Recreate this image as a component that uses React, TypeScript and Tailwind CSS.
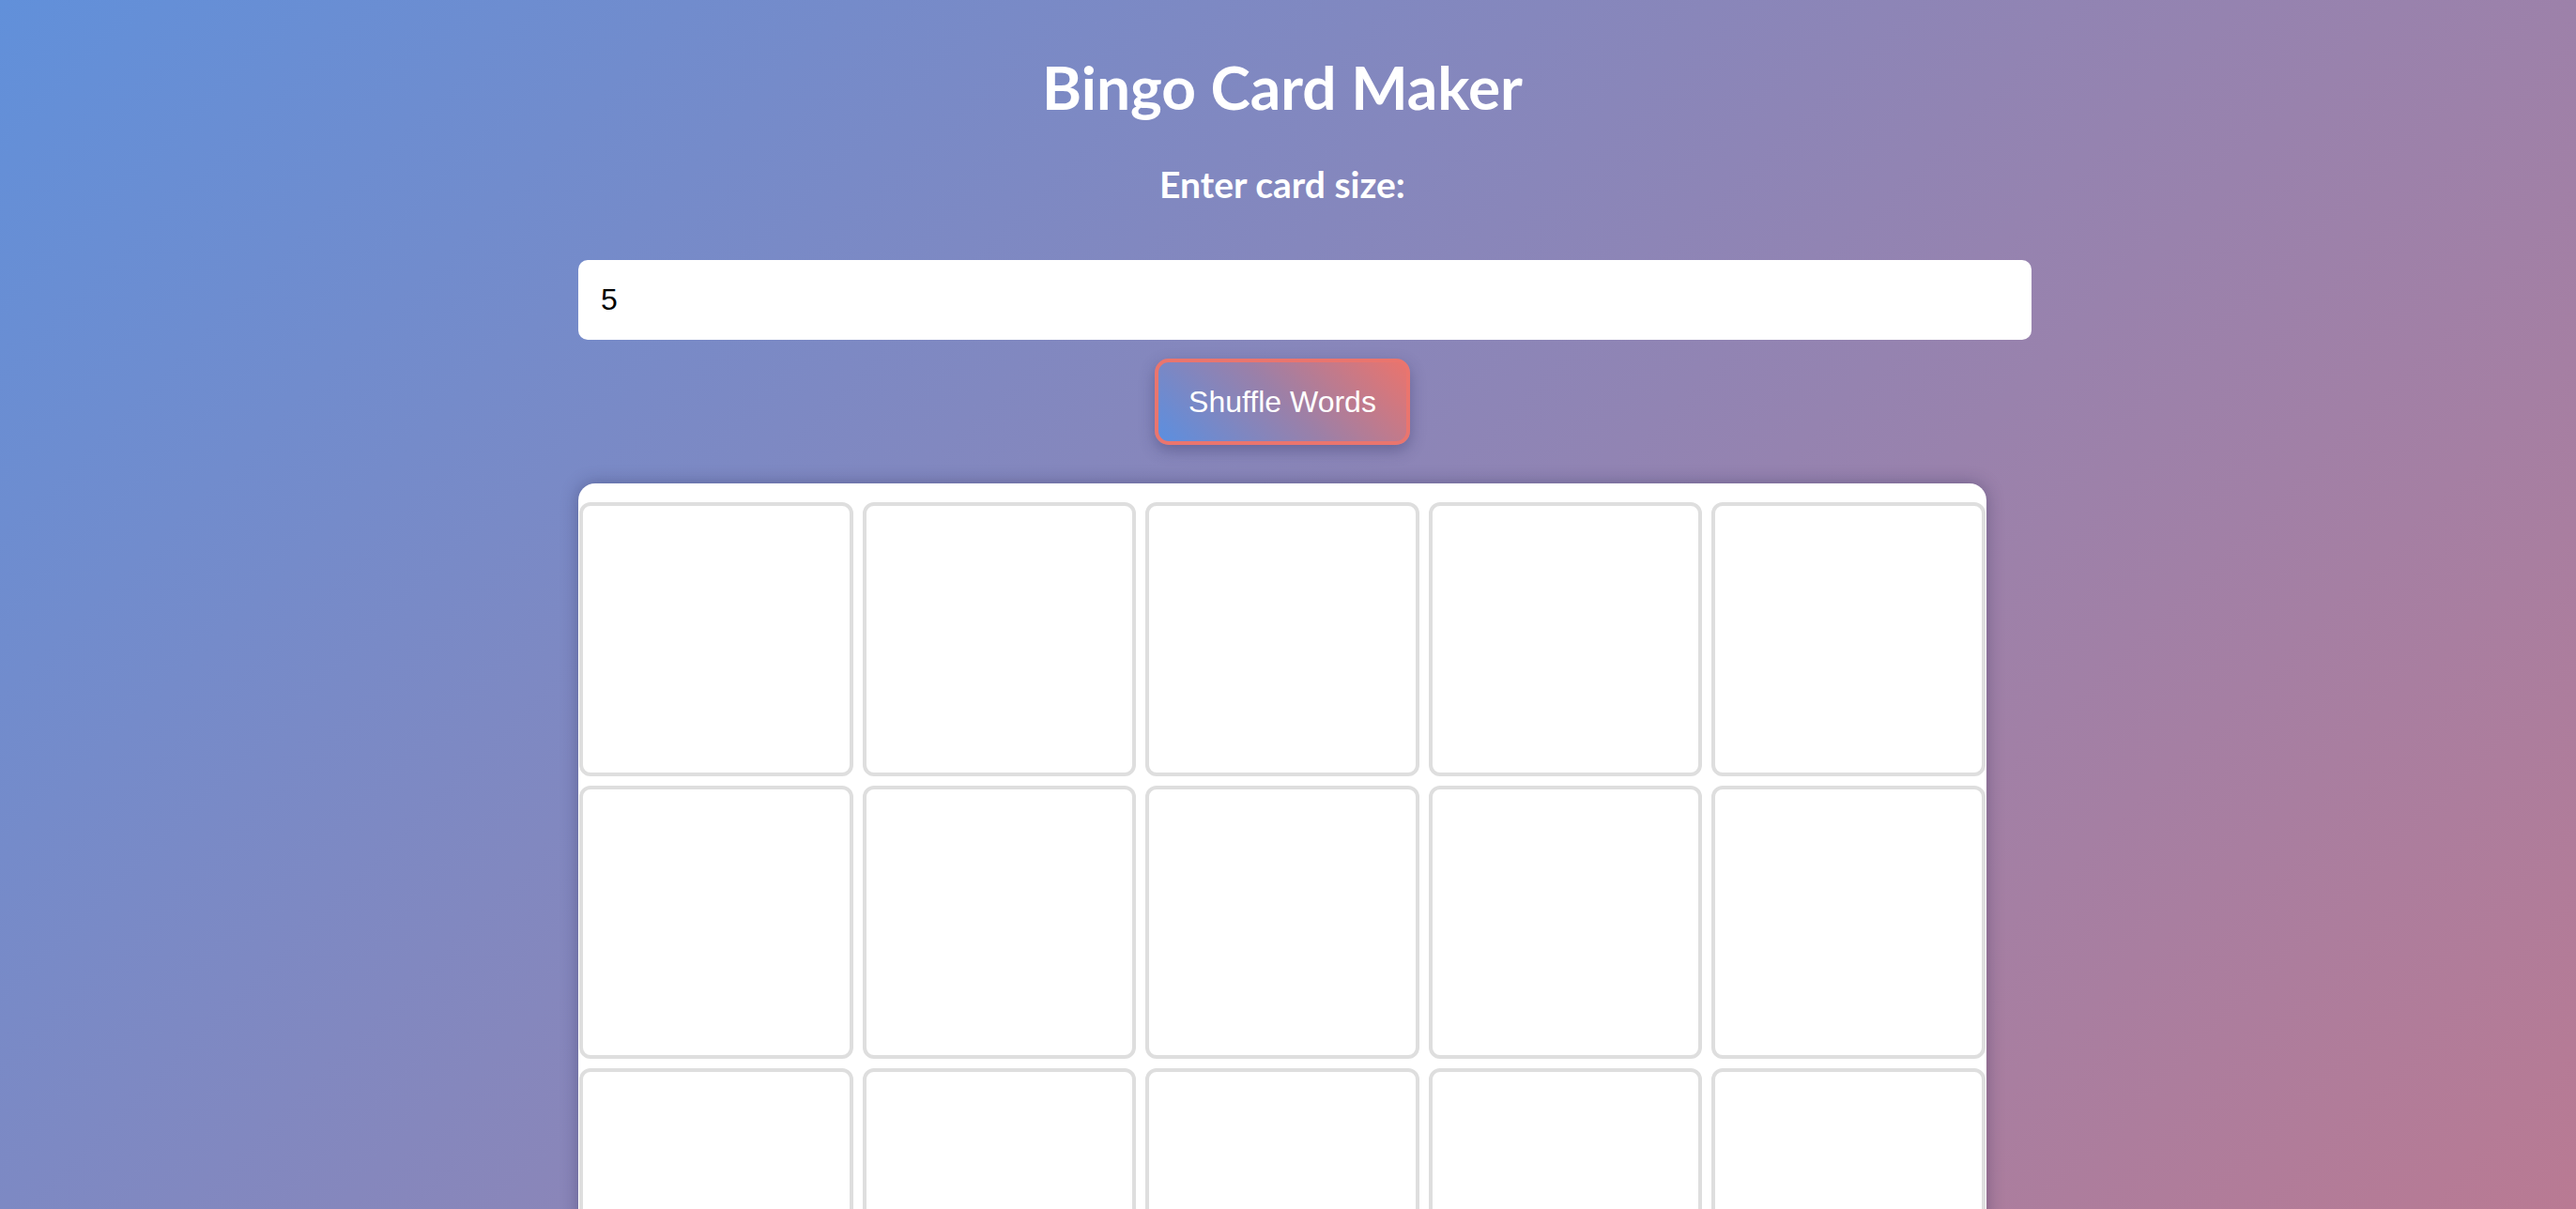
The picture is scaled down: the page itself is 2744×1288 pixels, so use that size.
import React from "react";

export default function App() {
  const cells = Array.from({ length: 25 }, (_, i) => i);
  return (
    <div className="h-screen w-full overflow-hidden bg-fixed bg-[linear-gradient(135deg,#6190da_0%,#b97a93_100%)]">
      <div className="flex justify-center pr-[12px]">
        <div className="flex w-[1500px] flex-col items-center pt-[61px]">
          <h1
            className="text-[64px] font-bold leading-none text-white"
            style={{ fontFamily: "Lato, 'Noto Sans', sans-serif" }}
          >
            Bingo Card Maker
          </h1>
          <label
            className="mt-[52px] text-[39px] font-bold leading-none text-white"
            style={{ fontFamily: "Lato, 'Noto Sans', sans-serif" }}
          >
            Enter card size:
          </label>
          <div className="mt-[61px] w-full">
            <input
              type="text"
              defaultValue="5"
              readOnly
              className="box-content h-[37px] w-full rounded-[10px] border-0 bg-white px-[24px] py-[24px] text-[32px] leading-[37px] text-black outline-none"
              style={{ fontFamily: "'Liberation Sans', Arial, sans-serif" }}
            />
          </div>
          <button
            className="mt-[20px] h-[92px] w-[272px] rounded-[15px] border-[4px] border-[#ea756e] bg-[linear-gradient(45deg,#5b8fe0_0%,#9a80a9_50%,#ea746d_100%)] text-[32px] leading-none text-white shadow-[0_6px_16px_rgba(40,40,90,0.35)]"
            style={{ fontFamily: "'Liberation Sans', Arial, sans-serif" }}
          >
            Shuffle Words
          </button>
          <div className="mt-[41px] w-full rounded-[18px] bg-white px-[1px] pt-[20px] pb-[20px] shadow-[0_0_18px_rgba(30,30,70,0.35)]">
            <div className="grid grid-cols-5 gap-[10px]">
              {cells.map((i) => (
                <div
                  key={i}
                  className="aspect-square rounded-[12px] border-[4px] border-[#dedede] bg-white"
                />
              ))}
            </div>
          </div>
        </div>
      </div>
    </div>
  );
}
